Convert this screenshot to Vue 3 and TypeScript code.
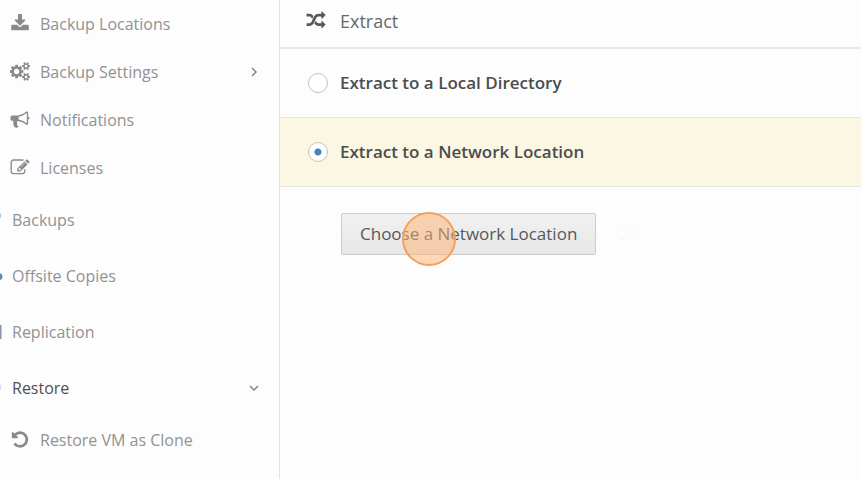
<script setup lang="ts">
import { ref } from 'vue'

interface NavItem {
  label: string
  level: 'sub' | 'main'
  icon: string
  active?: boolean
  chevron?: 'right' | 'down'
}

const icons: Record<string, string> = {
  download:
    'M1728 1120v320q0 40-28 68t-68 28h-1472q-40 0-68-28t-28-68v-320q0-40 28-68t68-28h465l135 136q58 56 136 56t136-56l136-136h464q40 0 68 28t28 68zm-325-569q17 41-14 70l-448 448q-18 19-45 19t-45-19l-448-448q-31-29-14-70 17-39 59-39h256v-448q0-26 19-45t45-19h256q26 0 45 19t19 45v448h256q42 0 59 39z',
  cogs:
    'M832 896q0-106-75-181t-181-75-181 75-75 181 75 181 181 75 181-75 75-181zm768 512q0-52-38-90t-90-38-90 38-38 90q0 53 37.5 90.5t90.5 37.5 90.5-37.5 37.5-90.5zm0-1024q0-52-38-90t-90-38-90 38-38 90q0 53 37.5 90.5t90.5 37.5 90.5-37.5 37.5-90.5zm-384 421v185q0 10-7 19.5t-16 10.5l-155 24q-11 35-32 76 34 48 90 115 7 11 7 20 0 12-7 19-23 30-82.5 89.5t-78.5 59.5q-11 0-21-7l-115-90q-37 19-77 31-11 108-23 155-7 24-30 24h-186q-11 0-20-7.5t-10-17.5l-23-153q-34-10-75-31l-118 89q-7 7-20 7-11 0-21-8-144-133-144-160 0-9 7-19 10-14 41-53t47-61q-23-44-35-82l-152-24q-10-1-17-9.5t-7-19.5v-185q0-10 7-19.5t16-10.5l155-24q11-35 32-76-34-48-90-115-7-11-7-20 0-12 7-20 22-30 82-89t79-59q11 0 21 7l115 90q34-18 77-32 11-108 23-154 7-24 30-24h186q11 0 20 7.5t10 17.5l23 153q34 10 75 31l118-89q8-7 20-7 11 0 21 8 144 133 144 160 0 8-7 19-12 16-42 54t-45 60q23 48 34 82l152 23q10 2 17 10.5t7 19.5zm640 533v140q0 16-149 31-12 27-30 52 51 113 51 138 0 4-4 7-122 71-124 71-8 0-46-47t-52-68q-20 2-30 2t-30-2q-14 21-52 68t-46 47q-2 0-124-71-4-3-4-7 0-25 51-138-18-25-30-52-149-15-149-31v-140q0-16 149-31 13-29 30-52-51-113-51-138 0-4 4-7 4-2 35-20t59-34 30-16q8 0 46 46.5t52 67.5q20-2 30-2t30 2q51-71 92-112l6-2q4 0 124 70 4 3 4 7 0 25-51 138 17 23 30 52 149 15 149 31zm0-1024v140q0 16-149 31-12 27-30 52 51 113 51 138 0 4-4 7-122 71-124 71-8 0-46-47t-52-68q-20 2-30 2t-30-2q-14 21-52 68t-46 47q-2 0-124-71-4-3-4-7 0-25 51-138-18-25-30-52-149-15-149-31v-140q0-16 149-31 13-29 30-52-51-113-51-138 0-4 4-7 4-2 35-20t59-34 30-16q8 0 46 46.5t52 67.5q20-2 30-2t30 2q51-71 92-112l6-2q4 0 124 70 4 3 4 7 0 25-51 138 17 23 30 52 149 15 149 31z',
  bullhorn:
    'M1664 640q53 0 90.5 37.5t37.5 90.5-37.5 90.5-90.5 37.5v384q0 52-38 90t-90 38q-417-347-812-380-58 19-91 66t-31 100.5 40 92.5q-20 33-23 65.5t6 58 33.5 55 48 50 61.5 50.5q-29 58-111.5 83t-168.5 11.5-132-55.5q-7-23-29.5-87.5t-32-94.5-23-89-15-101 3.5-98.5 22-110.5h-122q-66 0-113-47t-47-113v-192q0-66 47-113t113-47h480q435 0 896-384 52 0 90 38t38 90v384zm-128 604v-954q-394 302-768 343v270q377 42 768 341z',
  edit:
    'M888 1184l116-116-152-152-116 116v56h96v96h56zm440-720q-16-16-33 1l-350 350q-17 17-1 33t33-1l350-350q17-17 1-33zm80 594v190q0 119-84.5 203.5t-203.5 84.5h-832q-119 0-203.5-84.5t-84.5-203.5v-832q0-119 84.5-203.5t203.5-84.5h832q63 0 117 25 15 7 18 23 3 17-9 29l-49 49q-14 14-32 8-23-6-45-6h-832q-66 0-113 47t-47 113v832q0 66 47 113t113 47h832q66 0 113-47t47-113v-126q0-13 9-22l64-64q15-15 35-7t20 29zm-96-738l288 288-672 672h-288v-288zm444 132l-92 92-288-288 92-92q28-28 68-28t68 28l152 152q28 28 28 68t-28 68z',
  undo:
    'M1664 896q0 156-61 298t-164 245-245 164-298 61q-172 0-327-72.5t-264-204.5q-7-10-6.5-22.5t8.5-20.5l137-138q10-9 25-9 16 2 23 12 73 95 179 147t225 52q104 0 198.5-40.5t163.5-109.5 109.5-163.5 40.5-198.5-40.5-198.5-109.5-163.5-163.5-109.5-198.5-40.5q-98 0-188 35.5t-160 101.5l137 138q31 30 14 69-17 40-59 40h-448q-26 0-45-19t-19-45v-448q0-42 40-59 39-17 69 14l130 129q107-101 244.5-156.5t284.5-55.5q156 0 298 61t245 164 164 245 61 298z',
  random:
    'M666 481q-60 92-137 273-22-45-37-72.5t-40.5-63.5-51-56.5-63-35-81.5-14.5h-224q-14 0-23-9t-9-23v-192q0-14 9-23t23-9h224q250 0 410 225zm1126 799q0 14-9 23l-320 320q-9 9-23 9-13 0-22.5-9.5t-9.5-22.5v-192q-32 0-85 .5t-81 1-73-1-71-5-64-10.5-63-18.5-58-28.5-59-40-55-53.5-56-69.5q59-93 136-273 22 45 37 72.5t40.5 63.5 51 56.5 63 35 81.5 14.5h256v-192q0-14 9-23t23-9q12 0 24 10l319 319q9 9 9 23zm0-896q0 14-9 23l-320 320q-9 9-23 9-13 0-22.5-9.5t-9.5-22.5v-192h-256q-48 0-87 15t-69 45-51 61.5-45 77.5q-32 62-78 171-29 66-49.5 111t-54 105-64 100-74 83-90 68.5-106.5 42-128 16.5h-224q-14 0-23-9t-9-23v-192q0-14 9-23t23-9h224q48 0 87-15t69-45 51-61.5 45-77.5q32-62 78-171 29-66 49.5-111t54-105 64-100 74-83 90-68.5 106.5-42 128-16.5h256v-192q0-14 9-23t23-9q12 0 24 10l319 319q9 9 9 23z',
}

const items: NavItem[] = [
  { label: 'Backup Locations', level: 'sub', icon: 'download' },
  { label: 'Backup Settings', level: 'sub', icon: 'cogs', chevron: 'right' },
  { label: 'Notifications', level: 'sub', icon: 'bullhorn' },
  { label: 'Licenses', level: 'sub', icon: 'edit' },
  { label: 'Backups', level: 'main', icon: 'backups' },
  { label: 'Offsite Copies', level: 'main', icon: 'offsite' },
  { label: 'Replication', level: 'main', icon: 'replication' },
  { label: 'Restore', level: 'main', icon: 'restore', active: true, chevron: 'down' },
  { label: 'Restore VM as Clone', level: 'sub', icon: 'undo' },
]

const target = ref<'local' | 'network'>('network')
</script>

<template>
  <div class="layout">
    <nav class="sidebar">
      <a
        v-for="item in items"
        :key="item.label"
        href="#"
        class="nav-item"
        :class="[item.level, { active: item.active }]"
      >
        <svg v-if="item.level === 'sub'" class="icon" viewBox="0 0 1792 1792" aria-hidden="true">
          <path :d="icons[item.icon]" />
        </svg>
        <svg v-else class="edge" viewBox="0 0 4 20" aria-hidden="true">
          <path v-if="item.icon === 'backups'" d="M0 3.500Q1.500 4 0 8" fill="none" stroke="#8fc4dc" />
          <path v-else-if="item.icon === 'offsite'" d="M0 7Q2.500 8 2.500 11Q2.500 13.500 0 14z" fill="#5f86b5" />
          <path v-else-if="item.icon === 'replication'" d="M0 3h1.500v14h-1.500z" fill="#8796ab" />
          <path v-else d="M0 6Q1.500 9 0 13z" fill="#9fc0e0" />
        </svg>
        <span class="label">{{ item.label }}</span>
        <svg v-if="item.chevron" class="chevron" viewBox="0 0 12 12" aria-hidden="true">
          <path :d="item.chevron === 'right' ? 'M4 2l4 4-4 4' : 'M2 4l4 4 4-4'" />
        </svg>
      </a>
    </nav>

    <main class="content">
      <header class="heading">
        <svg class="icon" viewBox="0 0 1792 1792" aria-hidden="true"><path :d="icons.random" /></svg>
        <h1>Extract</h1>
      </header>

      <label class="option" :class="{ selected: target === 'local' }">
        <input v-model="target" type="radio" name="target" value="local" />
        <span>Extract to a Local Directory</span>
      </label>
      <label class="option" :class="{ selected: target === 'network' }">
        <input v-model="target" type="radio" name="target" value="network" />
        <span>Extract to a Network Location</span>
      </label>

      <div class="actions">
        <button type="button" class="choose">
          Choose a Network Location
          <span class="click-marker" aria-hidden="true"></span>
        </button>
        <span class="loader" aria-hidden="true"><i></i><i></i><i></i><i></i></span>
      </div>
    </main>
  </div>
</template>

<style>
body {
  background: #fdfdfd;
}
</style>

<style scoped>
.layout {
  display: flex;
  height: 100vh;
  overflow: hidden;
  font-family: 'Open Sans', 'Noto Sans', sans-serif;
  font-size: 16px;
  line-height: 24px;
  color: #4a4d50;
}

.sidebar {
  flex: 0 0 280px;
  box-sizing: border-box;
  border-right: 1px solid #e2e2e2;
}

.nav-item {
  display: flex;
  align-items: center;
  height: 48px;
  padding-right: 19px;
  color: #929292;
  text-decoration: none;
}

.nav-item.sub {
  padding-left: 10px;
  gap: 10px;
}

.nav-item.main {
  height: 56px;
  gap: 8px;
}

.nav-item.active {
  color: #505050;
}

.icon {
  flex: none;
  box-sizing: border-box;
  width: 20px;
  height: 20px;
  padding-bottom: 1px;
  fill: #8a8a8a;
}

.edge {
  flex: none;
  width: 4px;
  height: 20px;
}

.label {
  flex: 1;
}

.chevron {
  flex: none;
  width: 12px;
  height: 12px;
  fill: none;
  stroke: #858585;
  stroke-width: 1.5;
}

.content {
  flex: 1;
  min-width: 0;
}

.heading {
  display: flex;
  align-items: center;
  gap: 14px;
  box-sizing: border-box;
  height: 49px;
  padding: 0 26px 5px;
  border-bottom: 2px solid #e9e9e9;
}

.heading .icon {
  fill: #55585a;
}

h1 {
  margin: 0;
  font-size: 18px;
  font-weight: 400;
  color: #66696c;
}

.option {
  display: flex;
  align-items: center;
  gap: 12px;
  box-sizing: border-box;
  height: 69px;
  padding: 0 28px;
  border-bottom: 1px solid #e6e4dc;
  font-size: 17px;
  font-weight: 600;
}

.option.selected {
  background: #fcf7e3;
}

.option input {
  appearance: none;
  flex: none;
  box-sizing: border-box;
  width: 20px;
  height: 20px;
  margin: 0;
  border: 1px solid #c2c2c2;
  border-radius: 50%;
  background: #fff;
}

.option input:checked {
  background: radial-gradient(circle, #4484c0 3px, #fff 4px);
}

.actions {
  display: flex;
  align-items: center;
  gap: 25px;
  padding: 26px 61px;
}

.choose {
  position: relative;
  height: 42px;
  padding: 0 18px;
  border: 1px solid #cbcbcd;
  border-radius: 2px;
  background: linear-gradient(#f1f1f2, #e7e7e8);
  font: inherit;
  font-size: 17px;
  color: #55585b;
}

.click-marker {
  position: absolute;
  top: -2px;
  left: 60px;
  box-sizing: border-box;
  width: 54px;
  height: 54px;
  border: 2px solid #f3a15c;
  border-radius: 50%;
  background: rgba(255, 178, 112, 0.5);
}

.loader {
  display: grid;
  grid-template-columns: 2px 2px;
  gap: 8px;
}

.loader i {
  width: 2px;
  height: 2px;
  background: #f3f3f3;
}
</style>
